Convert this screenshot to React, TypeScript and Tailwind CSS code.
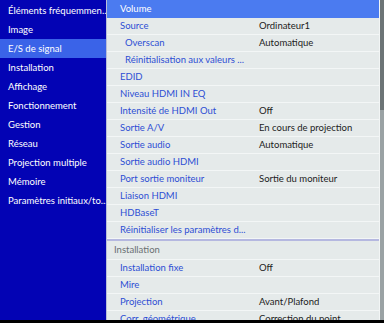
const menu = [
  "Éléments fréquemmen...",
  "Image",
  "E/S de signal",
  "Installation",
  "Affichage",
  "Fonctionnement",
  "Gestion",
  "Réseau",
  "Projection multiple",
  "Mémoire",
  "Paramètres initiaux/to...",
];

type Row = { label: string; value?: string; indent?: boolean };

const signal: Row[] = [
  { label: "Source", value: "Ordinateur1" },
  { label: "Overscan", value: "Automatique", indent: true },
  { label: "Réinitialisation aux valeurs ...", indent: true },
  { label: "EDID" },
  { label: "Niveau HDMI IN EQ" },
  { label: "Intensité de HDMI Out", value: "Off" },
  { label: "Sortie A/V", value: "En cours de projection" },
  { label: "Sortie audio", value: "Automatique" },
  { label: "Sortie audio HDMI" },
  { label: "Port sortie moniteur", value: "Sortie du moniteur" },
  { label: "Liaison HDMI" },
  { label: "HDBaseT" },
  { label: "Réinitialiser les paramètres d..." },
];

const install: Row[] = [
  { label: "Installation fixe", value: "Off" },
  { label: "Mire" },
  { label: "Projection", value: "Avant/Plafond" },
  { label: "Corr. géométrique", value: "Correction du point" },
];

function Item({ row }: { row: Row }) {
  return (
    <div className="flex h-[17px] shrink-0 items-center border-b border-[#f3f6f6]">
      <span className={`w-[152px] whitespace-nowrap text-[#2d4ed4] ${row.indent ? "pl-[18px]" : "pl-[13px]"}`}>
        {row.label}
      </span>
      <span className="whitespace-nowrap text-[#1c1c1c]">{row.value}</span>
    </div>
  );
}

export default function App() {
  return (
    <div
      className="flex h-[323px] w-[384px] flex-col overflow-hidden bg-black text-[9.5px] leading-none"
      style={{ fontFamily: "Lato, 'Open Sans', sans-serif" }}
    >
      <div className="flex h-[320px] min-h-0">
        <div className="flex w-[106px] shrink-0 flex-col bg-[#0303b4] pt-[1px] text-white">
          {menu.map((m) => (
            <div
              key={m}
              className={`flex h-[19px] items-center whitespace-nowrap pl-[8px] ${
                m === "E/S de signal" ? "bg-[#3a63e8]" : ""
              }`}
            >
              {m}
            </div>
          ))}
        </div>
        <div className="w-px bg-[#b8bed8]" />
        <div className="flex min-w-0 flex-1 flex-col overflow-hidden bg-[#e5eaea]">
          <div className="flex h-[18px] shrink-0 items-center bg-[#4b7bf0] pl-[13px] text-white">
            Volume
          </div>
          {signal.map((r) => (
            <Item key={r.label} row={r} />
          ))}
          <div className="h-[2px] shrink-0 bg-[#b5b8e0]" />
          <div className="flex h-[19px] shrink-0 items-center border-b border-[#f3f6f6] pl-[7px] text-[#6a6f72]">
            Installation
          </div>
          {install.map((r) => (
            <Item key={r.label} row={r} />
          ))}
        </div>
        <div className="w-[1px] bg-[#f2f5f5]" />
        <div className="flex w-[4px] flex-col bg-[#9aa2a4]">
          <div className="h-[110px] bg-[#6c7476]" />
        </div>
      </div>
      <div className="h-[3px] bg-black" />
    </div>
  );
}
